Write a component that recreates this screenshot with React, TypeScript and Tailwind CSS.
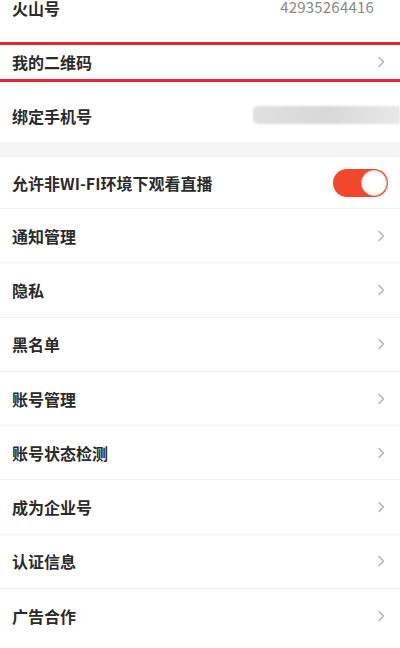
import { ReactNode } from "react";

const Chevron = () => (
  <svg width="8" height="12" viewBox="0 0 8 12" fill="none" className="shrink-0">
    <polyline points="2,1.5 6.5,6 2,10.5" stroke="#b3b3b3" strokeWidth="1.4" strokeLinecap="round" strokeLinejoin="round" />
  </svg>
);

const Toggle = () => (
  <div className="w-[55px] h-[28px] rounded-full bg-[#f2472c] flex items-center justify-end pr-[1px]">
    <div className="w-[26px] h-[26px] rounded-full bg-white border border-[#f0c8c0]" />
  </div>
);

const Row = ({ label, right, last }: { label: string; right?: ReactNode; last?: boolean }) => (
  <div
    className={`flex items-center justify-between pl-3 ${right ? "h-[52px] pr-3" : "h-[54.3px] pr-[15px]"} ${
      last ? "" : "border-b border-[#f1f1f1]"
    }`}
  >
    <span className="text-base font-semibold text-[#2b2b2b]">{label}</span>
    {right ?? <Chevron />}
  </div>
);

const items = ["通知管理", "隐私", "黑名单", "账号管理", "账号状态检测", "成为企业号", "认证信息", "广告合作"];

export default function App() {
  return (
    <div
      className="w-[400px] h-[648px] overflow-hidden bg-white"
      style={{ fontFamily: '"Noto Sans CJK SC", "Noto Sans", sans-serif' }}
    >
      <div className="-mt-[20px]">
        {/* account block */}
        <div className="h-[54px] flex items-center justify-between pl-3 pr-[26px]">
          <span className="text-base font-semibold text-[#2b2b2b] mt-[2px]">火山号</span>
          <span className="text-[15px] text-[#8a8a8a] tracking-[0.2px]">42935264416</span>
        </div>
        <div className="h-[54px] flex flex-col justify-center">
          <div className="border-y-[3px] border-[#e8262f] h-[40px] flex items-center justify-between pl-3 pr-[15px] mt-[2px]">
            <span className="text-base font-semibold text-[#2b2b2b]">我的二维码</span>
            <Chevron />
          </div>
        </div>
        <div className="h-[54px] flex items-center justify-between pl-3">
          <span className="text-base font-semibold text-[#2b2b2b] mt-[2px]">绑定手机号</span>
          <div className="w-[147px] h-[18px] rounded-l-[5px] bg-gradient-to-r from-[#e0e0e0] via-[#d8d8d8] to-[#e8e8e8] blur-[1px]" />
        </div>

        <div className="h-[15px] bg-[#f5f5f5]" />

        <Row label="允许非WI-FI环境下观看直播" right={<Toggle />} />
        {items.map((t, i) => (
          <Row key={t} label={t} last={i === items.length - 1} />
        ))}
      </div>
    </div>
  );
}
